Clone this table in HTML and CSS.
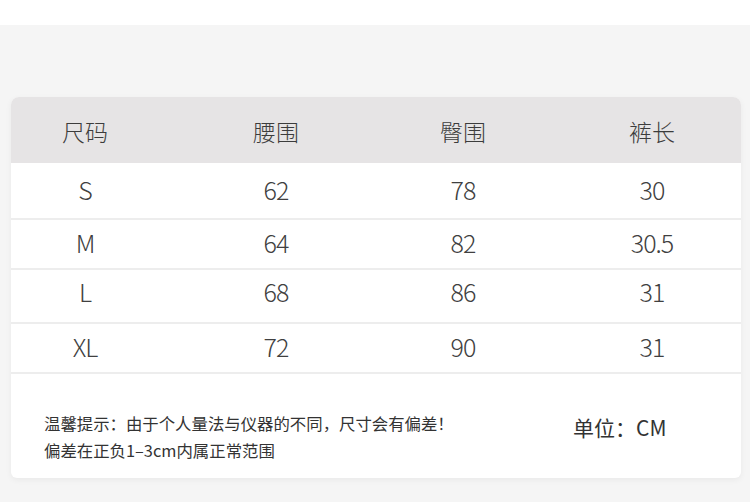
FILE: index.html
```html
<!DOCTYPE html>
<html lang="zh">
<head>
<meta charset="utf-8">
<link rel="stylesheet" href="styles.css">
</head>
<body>
<div class="top"></div>
<main class="stage">
  <section class="card">
    <div class="row head">
      <div class="c c1">尺码</div>
      <div class="c c2">腰围</div>
      <div class="c c3">臀围</div>
      <div class="c c4">裤长</div>
    </div>
    <div class="row r1">
      <div class="c c1">S</div>
      <div class="c c2">62</div>
      <div class="c c3">78</div>
      <div class="c c4">30</div>
    </div>
    <div class="row r2">
      <div class="c c1">M</div>
      <div class="c c2">64</div>
      <div class="c c3">82</div>
      <div class="c c4">30.5</div>
    </div>
    <div class="row r3">
      <div class="c c1">L</div>
      <div class="c c2">68</div>
      <div class="c c3">86</div>
      <div class="c c4">31</div>
    </div>
    <div class="row r4">
      <div class="c c1">XL</div>
      <div class="c c2">72</div>
      <div class="c c3">90</div>
      <div class="c c4">31</div>
    </div>
    <div class="foot">
      <div class="note">
        <p>温馨提示：由于个人量法与仪器的不同，尺寸会有偏差！</p>
        <p>偏差在正负1–3cm内属正常范围</p>
      </div>
      <div class="unit">单位：CM</div>
    </div>
  </section>
</main>
</body>
</html>
```

FILE: styles.css
```css
html, body {
  margin: 0;
  padding: 0;
  background: #f5f5f5;
}
body {
  width: 750px;
  height: 502px;
  overflow: hidden;
  font-family: "Noto Sans CJK SC", "Noto Sans", sans-serif;
  color: #3a3a3a;
}
.top {
  height: 25px;
  background: #ffffff;
}
.stage {
  padding: 72px 9px 0 11px;
}
.card {
  background: #ffffff;
  border-radius: 8px 8px 6px 6px;
  overflow: hidden;
  box-shadow: 0 2px 6px rgba(0, 0, 0, 0.05);
}
.row {
  display: grid;
  grid-template-columns: 148px 234px 140px 1fr;
  align-items: center;
  font-weight: 300;
  border-bottom: 2px solid #ededed;
}
.row .c {
  text-align: center;
  line-height: 1;
}
.row .c4 {
  padding-left: 30px;
}
.head {
  height: 66px;
  background: #e6e4e5;
  border-bottom: none;
  font-size: 23px;
  color: #3c3c3c;
}
.head .c {
  padding-top: 2px;
}
.r1, .r2, .r3, .r4 {
  font-size: 25px;
  letter-spacing: -1px;
  color: #404040;
}
.r1 { height: 55px; }
.r1 .c { padding-bottom: 3px; }
.r2 { height: 48px; }
.r3 { height: 52px; }
.r4 { height: 48px; }
.r2 .c, .r4 .c { padding-bottom: 4px; }
.r3 .c { padding-bottom: 10px; }
.foot {
  height: 104px;
  display: flex;
  align-items: center;
  padding: 22px 0 0 33px;
  box-sizing: border-box;
}
.note {
  flex: 0 0 529px;
  font-size: 16.4px;
  color: #333333;
}
.note p {
  margin: 0;
  line-height: 27px;
}
.unit {
  font-size: 21px;
  color: #333333;
  margin-top: -20px;
}
```
